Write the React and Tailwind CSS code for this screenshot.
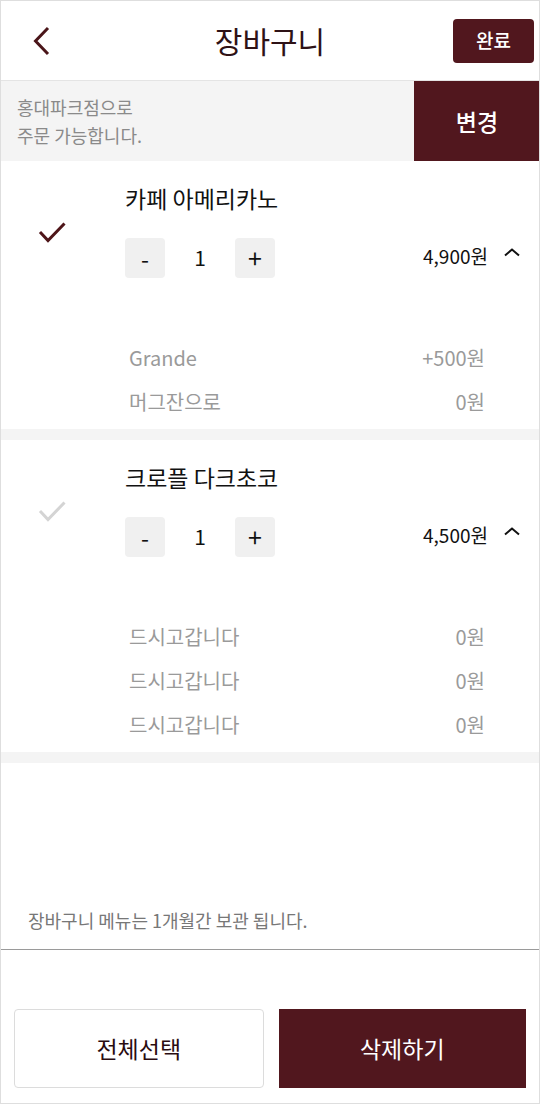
import React from 'react';

const FONT = { fontFamily: '"Noto Sans CJK KR", "Noto Sans", sans-serif' };

const items = [
  {
    name: '카페 아메리카노',
    qty: 1,
    price: '4,900원',
    checked: true,
    options: [
      { label: 'Grande', price: '+500원' },
      { label: '머그잔으로', price: '0원' },
    ],
  },
  {
    name: '크로플 다크초코',
    qty: 1,
    price: '4,500원',
    checked: false,
    options: [
      { label: '드시고갑니다', price: '0원' },
      { label: '드시고갑니다', price: '0원' },
      { label: '드시고갑니다', price: '0원' },
    ],
  },
];

const CheckMark = ({ on }) => (
  <svg width="28" height="22" viewBox="0 0 28 22" fill="none">
    <path
      d="M2 11 L10 19.5 L26.5 2.5"
      stroke={on ? '#4e1519' : '#d4d4d4'}
      strokeWidth="3"
      strokeLinecap="butt"
      strokeLinejoin="miter"
    />
  </svg>
);

const CartItem = ({ item }) => (
  <div className="flex pt-[19px] pb-[5px] bg-white">
    <div className="w-[124px] shrink-0 pl-[37px] pt-[41px]">
      <CheckMark on={item.checked} />
    </div>
    <div className="flex-1 pr-[19px]">
      <div className="h-[36px] flex items-center text-[23px] text-[#111]">{item.name}</div>
      <div className="mt-[22px] h-[40px] flex items-center">
        <button className="w-[40px] h-[40px] rounded-[4px] bg-[#f0f0f0] text-[23px] text-[#111] flex items-center justify-center">-</button>
        <span className="w-[70px] text-center text-[21px] text-[#111]">{item.qty}</span>
        <button className="w-[40px] h-[40px] rounded-[4px] bg-[#f0f0f0] text-[25px] text-[#111] flex items-center justify-center">+</button>
        <div className="flex-1" />
        <span className="text-[19px] text-[#111] -mt-[4px]">{item.price}</span>
        <svg className="ml-[16px] self-start mt-[10px]" width="16" height="9" viewBox="0 0 16 9" fill="none">
          <path d="M1 7.5 L8 1.5 L15 7.5" stroke="#111" strokeWidth="2" />
        </svg>
      </div>
      <div className="mt-[58px] pl-[4px] pr-[35px]">
        {item.options.map((o, i) => (
          <div key={i} className="h-[44px] flex items-center justify-between text-[20px] text-[#9a9a9a]">
            <span>{o.label}</span>
            <span>{o.price}</span>
          </div>
        ))}
      </div>
    </div>
  </div>
);

export default function App() {
  return (
    <div className="w-[540px] h-[1104px] bg-white border border-[#dedede] flex flex-col overflow-hidden" style={FONT}>
      <header className="h-[80px] shrink-0 grid grid-cols-[1fr_auto_1fr] items-center border-b border-[#e4e4e4]">
        <div className="pl-[31px] flex items-center">
          <svg width="20" height="30" viewBox="0 0 20 30" fill="none">
            <path d="M16 2 L3.5 15 L16 28" stroke="#4a1519" strokeWidth="3" />
          </svg>
        </div>
        <h1 className="text-[30px] text-[#2e1216] leading-none -mt-[2px]">장바구니</h1>
        <div className="flex justify-end pr-[5px]">
          <button className="w-[81px] h-[44px] rounded-[4px] bg-[#51171e] text-white text-[19px] font-medium flex items-center justify-center">
            완료
          </button>
        </div>
      </header>

      <div className="h-[80px] shrink-0 flex">
        <div className="flex-1 bg-[#f4f4f4] pl-[16px] flex flex-col justify-center text-[18px] leading-[28px] text-[#8a8a8a]">
          <span>홍대파크점으로</span>
          <span>주문 가능합니다.</span>
        </div>
        <button className="w-[126px] bg-[#51171e] text-white text-[23px] font-medium flex items-center justify-center -mr-[1px]">
          변경
        </button>
      </div>

      <CartItem item={items[0]} />
      <div className="h-[11px] shrink-0 bg-[#f4f4f4]" />
      <CartItem item={items[1]} />
      <div className="h-[11px] shrink-0 bg-[#f4f4f4]" />

      <div className="flex-1" />
      <p className="pl-[27px] pb-[18px] text-[18px] leading-[22px] text-[#777]">장바구니 메뉴는 1개월간 보관 됩니다.</p>
      <div className="h-px bg-[#9a9a9a] shrink-0" />

      <div className="h-[153px] shrink-0 flex gap-[15px] px-[13px] pt-[59px] pb-[14px]">
        <button className="flex-1 h-[79px] rounded-[4px] border border-[#dcdcdc] bg-white text-[23px] text-[#2a0c10] flex items-center justify-center">
          전체선택
        </button>
        <button className="flex-1 h-[79px] bg-[#51171e] text-[23px] text-white flex items-center justify-center">
          삭제하기
        </button>
      </div>
    </div>
  );
}
